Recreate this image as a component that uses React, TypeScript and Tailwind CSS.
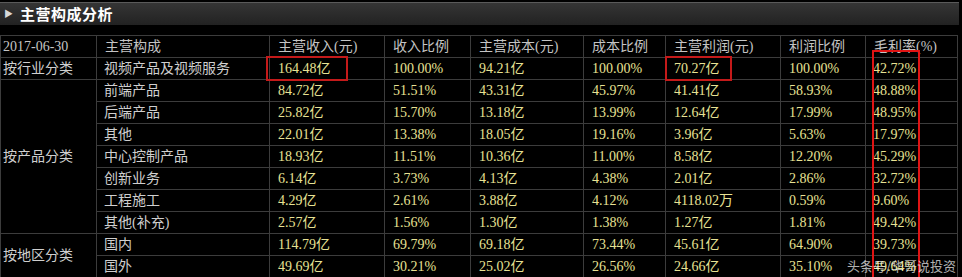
import React from 'react';

const COLS = [96, 173, 115, 86, 113, 82, 115, 85, 92];

interface Row {
    group?: string;
    span?: number;
    name: string;
    vals: string[];
}

const HEAD = ['2017-06-30', '主营构成', '主营收入(元)', '收入比例', '主营成本(元)', '成本比例', '主营利润(元)', '利润比例', '毛利率(%)'];

const ROWS: Row[] = [
    { group: '按行业分类', span: 1, name: '视频产品及视频服务', vals: ['164.48亿', '100.00%', '94.21亿', '100.00%', '70.27亿', '100.00%', '42.72%'] },
    { group: '按产品分类', span: 7, name: '前端产品', vals: ['84.72亿', '51.51%', '43.31亿', '45.97%', '41.41亿', '58.93%', '48.88%'] },
    { name: '后端产品', vals: ['25.82亿', '15.70%', '13.18亿', '13.99%', '12.64亿', '17.99%', '48.95%'] },
    { name: '其他', vals: ['22.01亿', '13.38%', '18.05亿', '19.16%', '3.96亿', '5.63%', '17.97%'] },
    { name: '中心控制产品', vals: ['18.93亿', '11.51%', '10.36亿', '11.00%', '8.58亿', '12.20%', '45.29%'] },
    { name: '创新业务', vals: ['6.14亿', '3.73%', '4.13亿', '4.38%', '2.01亿', '2.86%', '32.72%'] },
    { name: '工程施工', vals: ['4.29亿', '2.61%', '3.88亿', '4.12%', '4118.02万', '0.59%', '9.60%'] },
    { name: '其他(补充)', vals: ['2.57亿', '1.56%', '1.30亿', '1.38%', '1.27亿', '1.81%', '49.42%'] },
    { group: '按地区分类', span: 2, name: '国内', vals: ['114.79亿', '69.79%', '69.18亿', '73.44%', '45.61亿', '64.90%', '39.73%'] },
    { name: '国外', vals: ['49.69亿', '30.21%', '25.02亿', '26.56%', '24.66亿', '35.10%', '49.64%'] },
];

const font = { fontFamily: '"Liberation Serif", "Noto Sans CJK SC", serif' };

export default function App() {
    return (
        <div className="relative w-[962px] h-[277px] overflow-hidden bg-black" style={font}>
            {/* title bar */}
            <div className="mt-[2px] h-[23px] w-[959px] flex items-center gap-[7px] pl-[4px] border-t border-[#5a5a5a] bg-gradient-to-b from-[#353535] to-[#222222]">
                <span className="text-[9px] leading-none text-[#d8d8d8]">▶</span>
                <span className="text-[15px] font-bold text-white tracking-[0.5px]" style={{ fontFamily: '"Noto Sans CJK SC", sans-serif' }}>主营构成分析</span>
            </div>

            <table className="mt-[10px] border-collapse table-fixed text-[14px] leading-none">
                <colgroup>
                    {COLS.map((w, i) => <col key={i} style={{ width: w }} />)}
                </colgroup>
                <thead>
                    <tr className="h-[22px] text-[#c4c4c4]">
                        {HEAD.map((h, i) => (
                            <th key={i} className={`border border-[#3c3c3c] font-normal text-left whitespace-nowrap ${i === 0 ? 'pl-[2px]' : 'pl-2'}`}>{h}</th>
                        ))}
                    </tr>
                </thead>
                <tbody>
                    {ROWS.map((r, ri) => (
                        <tr key={ri} className="h-[22px]">
                            {r.group && (
                                <td rowSpan={r.span} className="border border-[#3c3c3c] pl-[2px] text-[#cfcfcf] align-middle whitespace-nowrap">{r.group}</td>
                            )}
                            <td className="border border-[#3c3c3c] pl-[7px] text-[#cfcfcf] whitespace-nowrap">{r.name}</td>
                            {r.vals.map((v, vi) => (
                                <td key={vi} className={`border border-[#3c3c3c] text-[#e8e294] whitespace-nowrap ${vi === 6 ? 'pl-[7px]' : 'pl-2'}`}>
                                    <span className="relative">
                                        {v}
                                        {ri === 0 && (vi === 0 || vi === 4) && (
                                            <span className={`absolute top-[-5px] bottom-[-5px] border-2 border-[#c41a1a] ${vi === 0 ? 'left-[-12px] right-[-17px]' : 'left-[-9px] right-[-12px]'}`} />
                                        )}
                                    </span>
                                </td>
                            ))}
                        </tr>
                    ))}
                </tbody>
            </table>

            {/* highlight on gross margin column */}
            <div className="absolute left-[872px] top-[50px] w-[48px] h-[240px] border-2 border-[#e01414]" />

            <div className="absolute right-[6px] bottom-[2px] text-[13px] text-white/70" style={{ fontFamily: '"Noto Sans CJK SC", sans-serif' }}>
                头条号/华哥说投资
            </div>
        </div>
    );
}
